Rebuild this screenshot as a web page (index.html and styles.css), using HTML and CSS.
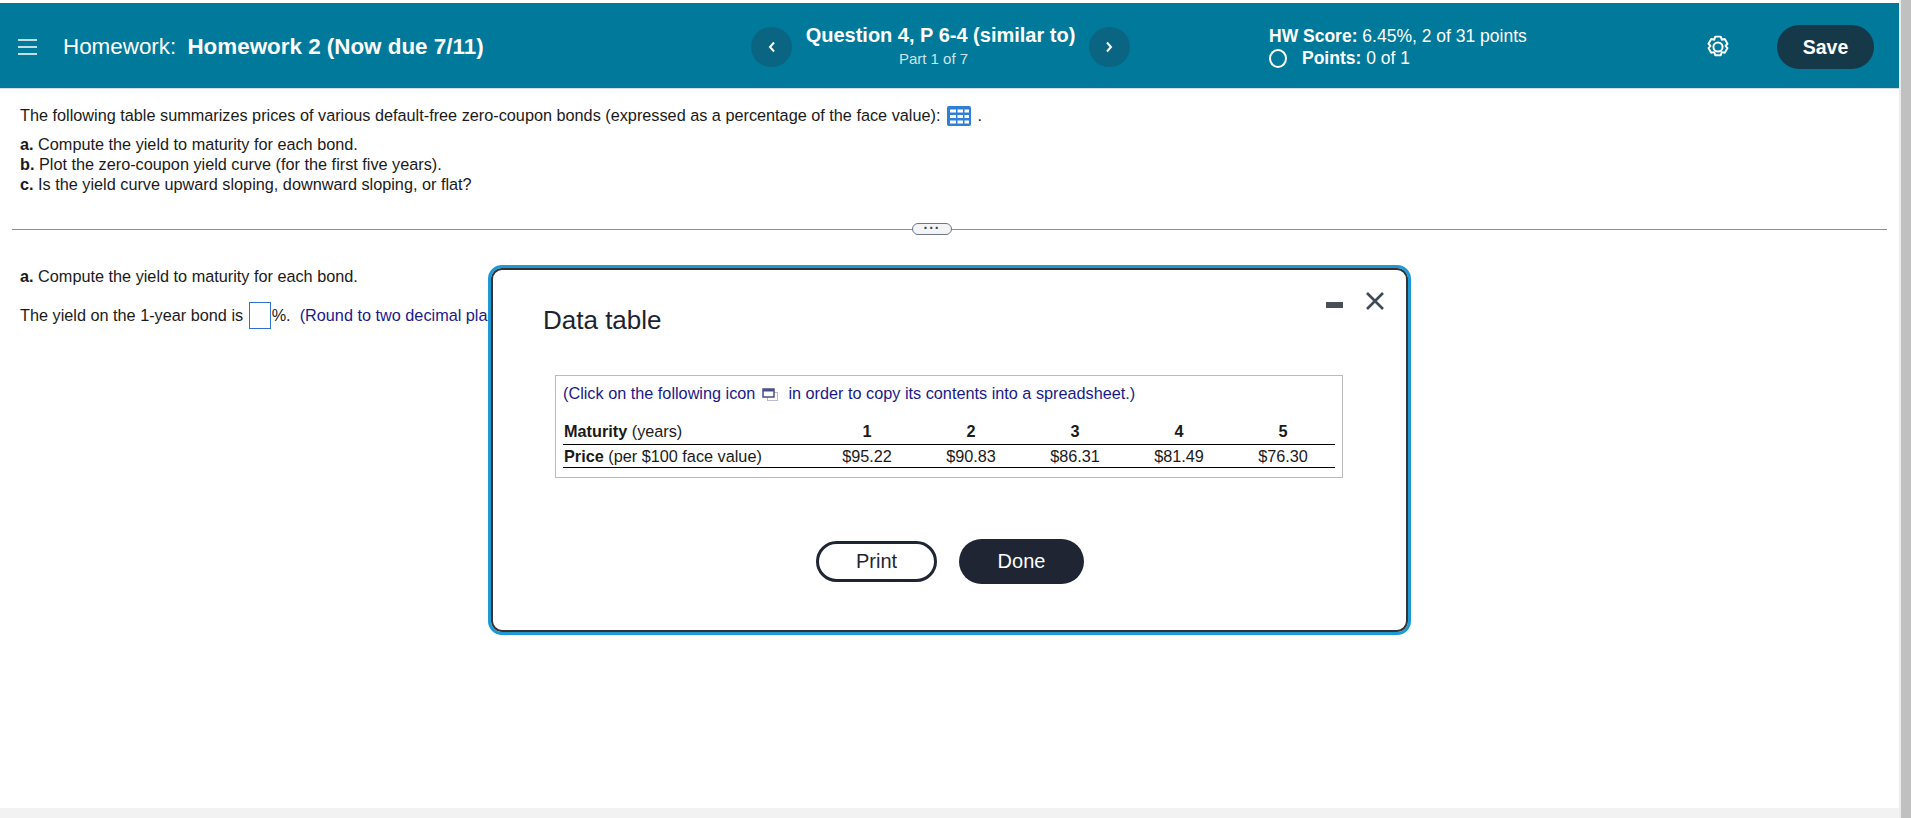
FILE: index.html
```html
<!DOCTYPE html>
<html>
<head>
    <meta charset="utf-8">
    <title>Homework 2</title>
    <link rel="stylesheet" href="styles.css">
</head>
<body>
    <div class="page">
        <div class="main">
            <header class="topbar">
                <div class="topbar-left">
                    <svg class="menu-icon" width="19" height="16" viewBox="0 0 19 16"><path d="M0 1h19M0 8h19M0 15h19" stroke="#fff" stroke-width="1.5" fill="none"/></svg>
                    <div class="hw-title">Homework: <b>Homework 2 (Now due 7/11)</b></div>
                </div>
                <div class="question-nav">
                    <div class="nav-circle"><svg width="8" height="12" viewBox="0 0 8 12"><path d="M6 1.500 2 6l4 4.500" stroke="#fff" stroke-width="2" fill="none"/></svg></div>
                    <div class="question-info">
                        <div class="question-name">Question 4, P 6-4 (similar to)</div>
                        <div class="question-part">Part 1 of 7</div>
                    </div>
                    <div class="nav-circle"><svg width="8" height="12" viewBox="0 0 8 12"><path d="M2 1.500 6 6l-4 4.500" stroke="#fff" stroke-width="2" fill="none"/></svg></div>
                </div>
                <div class="score">
                    <div><b>HW Score:</b> 6.45%, 2 of 31 points</div>
                    <div class="points"><span class="radio"></span><span><b>Points:</b> 0 of 1</span></div>
                </div>
                <svg class="gear" width="22" height="24" viewBox="2 1 20 22"><path d="M9.500 2.500h5l1 2.800 2.700-.6 2.500 4.300-1.800 2 1.800 2-2.500 4.300-2.700-.6-1 2.800h-5l-1-2.800-2.700.6-2.500-4.300 1.800-2-1.800-2 2.500-4.300 2.700.6z" stroke="#fff" stroke-width="1.800" stroke-linejoin="round" fill="none"/><circle cx="12" cy="12" r="4.200" stroke="#fff" stroke-width="1.800" fill="none"/></svg>
                <button class="save-btn">Save</button>
            </header>

            <section class="prompt">
                <p class="intro">The following table summarizes prices of various default-free zero-coupon bonds (expressed as a percentage of the face value):
                    <svg class="table-icon" width="24" height="20" viewBox="0 0 24 20"><rect width="24" height="20" rx="2" fill="#2f7fd9"/><path d="M3 3.500h6v3H3zM10.500 3.500H16v3h-5.500zM17.500 3.500H22v3h-4.500zM3 9h6v3H3zM10.500 9H16v3h-5.500zM17.500 9H22v3h-4.500zM3 14.500h6v3H3zM10.500 14.500H16v3h-5.500zM17.500 14.500H22v3h-4.500z" fill="#fff"/></svg>
                    <span class="dot">.</span></p>
                <p><b>a.</b> Compute the yield to maturity for each bond.</p>
                <p><b>b.</b> Plot the zero-coupon yield curve (for the first five years).</p>
                <p><b>c.</b> Is the yield curve upward sloping, downward sloping, or flat?</p>
            </section>

            <div class="divider"><span class="more-pill">&middot;&middot;&middot;</span></div>

            <section class="answer">
                <p class="answer-head"><b>a.</b> Compute the yield to maturity for each bond.</p>
                <p class="answer-line">The yield on the 1-year bond is <span class="answer-box"></span>%.&nbsp; <span class="hint">(Round to two decimal places.)</span></p>
            </section>
        </div>
        <div class="bottom-strip"></div>

        <div class="modal">
            <div class="modal-controls">
                <span class="minimize"></span>
                <svg width="18" height="18" viewBox="0 0 18 18"><path d="M1 1l16 16M17 1 1 17" stroke="#3f4a58" stroke-width="2.600" fill="none"/></svg>
            </div>
            <h2 class="modal-title">Data table</h2>
            <div class="data-box">
                <div class="copy-note">(Click on the following icon
                    <svg class="copy-icon" width="16" height="13" viewBox="0 0 16 13"><rect x="5.500" y="4.500" width="10" height="8" fill="none" stroke="#b9b9dc"/><rect x="1" y="1" width="11" height="8" fill="#fff" stroke="#4a4f86" stroke-width="1.500"/><rect x="1" y="1" width="11" height="2.500" fill="#4a4f86"/></svg>
                    in order to copy its contents into a spreadsheet.)</div>
                <table class="bond-table">
                    <tr class="head-row">
                        <td class="row-label"><b>Maturity</b> (years)</td>
                        <th>1</th><th>2</th><th>3</th><th>4</th><th>5</th>
                    </tr>
                    <tr class="price-row">
                        <td class="row-label"><b>Price</b> (per $100 face value)</td>
                        <td>$95.22</td><td>$90.83</td><td>$86.31</td><td>$81.49</td><td>$76.30</td>
                    </tr>
                </table>
            </div>
            <div class="modal-buttons">
                <button class="print-btn">Print</button>
                <button class="done-btn">Done</button>
            </div>
        </div>
    </div>
    <div class="scrollbar"></div>
</body>
</html>
```

FILE: styles.css
```css
html, body {
    margin: 0;
    height: 100%;
    overflow: hidden;
}

body {
    display: flex;
    font-family: "Liberation Sans", Arial, sans-serif;
    font-size: 16.25px;
    color: #1a1a1a;
    background-color: #fff;
}

p {
    margin: 0;
}

.page {
    position: relative;
    flex: 1;
    display: flex;
    flex-direction: column;
    border-right: 2px solid #ececec;
}

.main {
    flex: 1;
    padding-top: 3px;
}

.bottom-strip {
    height: 10px;
    background-color: #f2f2f2;
}

.scrollbar {
    width: 10px;
    background-color: #c0c0c0;
}

/* top bar */
.topbar {
    display: flex;
    align-items: center;
    box-sizing: border-box;
    height: 86px;
    padding-top: 3px;
    background-color: #00799b;
    border-bottom: 1px solid #d5dbe3;
    color: #fff;
}

.topbar-left {
    display: flex;
    align-items: center;
    width: 751px;
    padding-left: 18px;
    box-sizing: border-box;
}

.menu-icon {
    margin-right: 26px;
}

.hw-title {
    font-size: 22.4px;
}

.hw-title b {
    margin-left: 5px;
}

.question-nav {
    display: flex;
    align-items: center;
    width: 379px;
    justify-content: space-between;
}

.nav-circle {
    display: flex;
    align-items: center;
    justify-content: center;
    width: 41px;
    height: 40px;
    border-radius: 50%;
    background-color: #0a6583;
}

.question-info {
    text-align: center;
    margin-top: -3px;
}

.question-name {
    font-size: 20px;
    font-weight: bold;
    margin-bottom: 3px;
}

.question-part {
    padding-right: 14px;
    font-size: 15px;
    color: #d3e3e9;
}

.score {
    width: 438px;
    margin-left: 139px;
    font-size: 17.5px;
    line-height: 22px;
}

.points {
    display: flex;
    align-items: center;
}

.radio {
    width: 14px;
    height: 15px;
    border: 2px solid #fff;
    border-radius: 50%;
    margin-right: 15px;
}

.gear {
    margin-right: 48px;
}

.save-btn {
    width: 97px;
    height: 44px;
    border: none;
    border-radius: 22px;
    background-color: #16394a;
    color: #fff;
    font-family: inherit;
    font-size: 19.5px;
    font-weight: bold;
}

/* question text */
.prompt {
    padding: 16px 20px 0;
    line-height: 20px;
}

.intro {
    margin-bottom: 8px;
}

.table-icon {
    vertical-align: -5px;
    margin-left: 2px;
}

.dot {
    margin-left: 2px;
}

.divider {
    position: relative;
    height: 1px;
    margin: 35px 12px 0;
    background-color: #8a8f99;
}

.more-pill {
    position: absolute;
    left: 900px;
    top: -6px;
    box-sizing: border-box;
    width: 40px;
    height: 12px;
    border: 1px solid #6f7784;
    border-radius: 6px;
    background-color: #f2f4f6;
    color: #444;
    font-size: 14px;
    font-weight: bold;
    line-height: 9px;
    letter-spacing: 1px;
    text-align: center;
}

.answer {
    padding: 36px 20px 0;
}

.answer-head {
    line-height: 20px;
    margin-bottom: 16px;
}

.answer-line {
    display: flex;
    align-items: center;
    white-space: pre-wrap;
}

.answer-box {
    width: 20px;
    height: 25px;
    margin: 0 1px 0 1px;
    border: 1px solid #2f6fd0;
}

.hint {
    color: #1a1a8a;
}

/* data table dialog */
.modal {
    position: absolute;
    left: 488px;
    top: 265px;
    box-sizing: border-box;
    width: 923px;
    height: 370px;
    padding: 0 52px;
    border: 3px solid #1d9ad6;
    border-radius: 14px;
    box-shadow: inset 0 0 0 2px #333;
    background-color: #fff;
}

.modal-controls {
    position: absolute;
    right: 24px;
    top: 24px;
    display: flex;
    align-items: center;
    gap: 23px;
}

.minimize {
    width: 17px;
    height: 6px;
    margin-top: 8px;
    background-color: #4a4f57;
}

.modal-title {
    margin: 0;
    padding-top: 36px;
    font-size: 26px;
    font-weight: normal;
    line-height: 32px;
    color: #1c2430;
}

.data-box {
    box-sizing: border-box;
    width: 788px;
    height: 103px;
    margin: 39px 0 0 12px;
    padding: 8px 7px 0;
    border: 1px solid #bbb;
}

.copy-note {
    color: #1a1a8a;
    line-height: 18px;
}

.copy-icon {
    vertical-align: -2px;
    margin: 0 6px 0 2px;
}

.bond-table {
    width: 771px;
    margin-top: 20px;
    border-collapse: collapse;
    table-layout: fixed;
}

.bond-table th,
.bond-table td {
    padding: 0;
    width: 104px;
    height: 22px;
    text-align: center;
    font-size: 16.25px;
}

.bond-table .row-label {
    width: 251px;
    padding-left: 1px;
    text-align: left;
}

.head-row {
    border-bottom: 1px solid #000;
}

.head-row th,
.head-row td {
    vertical-align: top;
}

.price-row {
    border-bottom: 1px solid #000;
}

.modal-buttons {
    display: flex;
    align-items: center;
    gap: 22px;
    margin: 61px 0 0 273px;
}

.print-btn,
.done-btn {
    font-family: inherit;
    font-size: 20px;
}

.print-btn {
    width: 121px;
    height: 41px;
    border: 3px solid #1f2533;
    border-radius: 21px;
    background-color: #fff;
    color: #1f2533;
}

.done-btn {
    width: 125px;
    height: 45px;
    border: none;
    border-radius: 23px;
    background-color: #1f2533;
    color: #fff;
}
```
